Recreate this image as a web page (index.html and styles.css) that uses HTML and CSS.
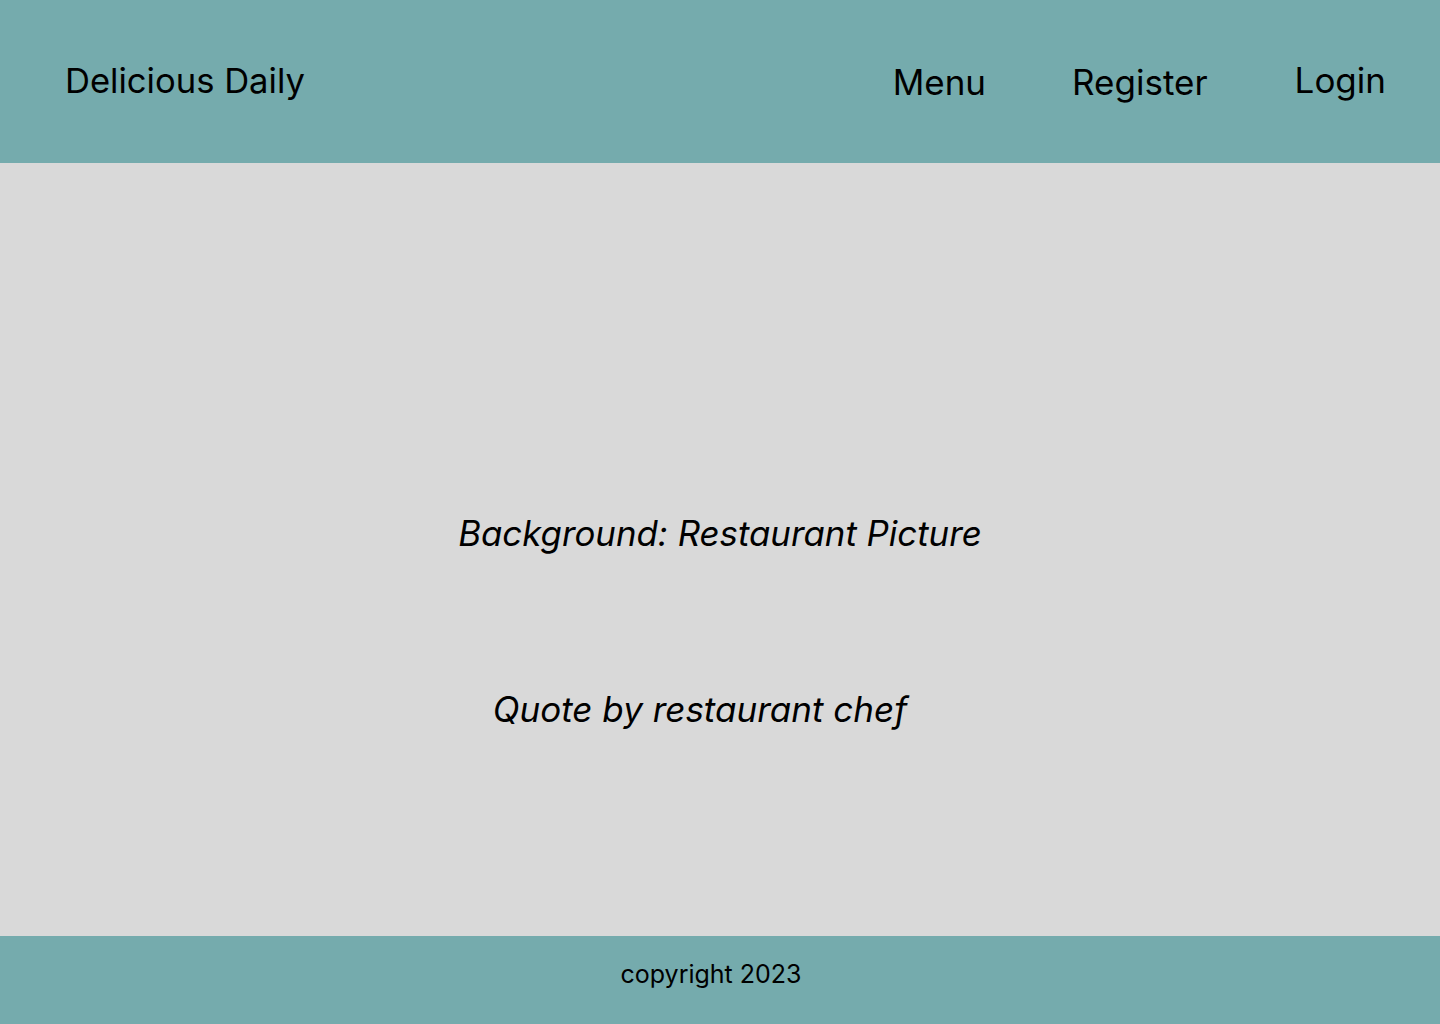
FILE: index.html
```html
<!DOCTYPE html>
<html lang="en">
<head>
<meta charset="utf-8">
<title>Delicious Daily</title>
<link rel="stylesheet" href="styles.css">
</head>
<body>
<div class="page">
  <header class="topbar">
    <div class="brand">Delicious Daily</div>
    <nav class="nav">
      <a class="nav-link nav-menu" href="#">Menu</a>
      <a class="nav-link nav-register" href="#">Register</a>
      <a class="nav-link nav-login" href="#">Login</a>
    </nav>
  </header>
  <main class="hero">
    <p class="hero-bg">Background: Restaurant Picture</p>
    <p class="hero-quote">Quote by restaurant chef</p>
  </main>
  <footer class="footer">
    <span class="copyright">copyright 2023</span>
  </footer>
</div>
</body>
</html>
```

FILE: styles.css
```css
* { box-sizing: border-box; }
html, body { margin: 0; padding: 0; }
body {
  font-family: Inter, "Noto Sans", sans-serif;
  color: #000;
  background: #d9d9d9;
}
.page {
  display: flex;
  flex-direction: column;
  height: 1024px;
}
.topbar {
  height: 163px;
  background: #75abad;
  display: flex;
  justify-content: space-between;
  align-items: flex-start;
  padding: 58px 54px 0 65px;
}
.brand {
  font-size: 34.6px;
  line-height: 44px;
}
.nav {
  display: flex;
  gap: 87px;
  font-size: 35px;
  line-height: 44px;
}
.nav-link {
  color: #000;
  text-decoration: none;
}
.nav-menu, .nav-register { margin-top: 2px; }
.nav-menu { margin-right: -1px; }
.hero {
  flex: 1;
  background: #d9d9d9;
  display: flex;
  flex-direction: column;
  align-items: center;
}
.hero p {
  margin: 0;
  font-style: italic;
  font-size: 35px;
  line-height: 40px;
}
.hero-bg {
  margin-top: 350px !important;
  font-size: 34.8px !important;
}
.hero-quote { margin-top: 136px !important; margin-right: 40px !important; }
.footer {
  height: 88px;
  background: #75abad;
  display: flex;
  justify-content: center;
  padding-top: 23px;
}
.copyright {
  font-size: 25px;
  line-height: 30px;
  margin-right: 18px;
}
```
